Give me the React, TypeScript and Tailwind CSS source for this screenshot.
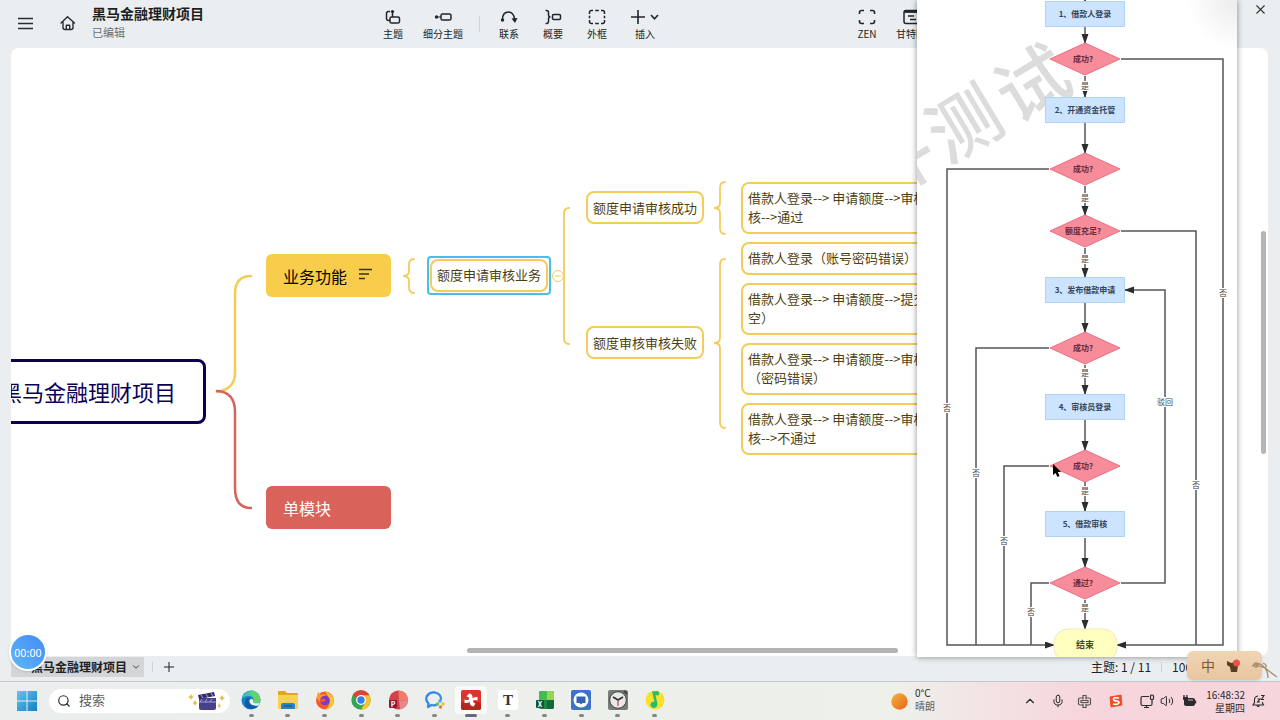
import type { ReactNode } from "react";
import { ChevronDown, ChevronUp, Mic, Plus, Search, Volume2, X } from "lucide-react";

const leaves = [
  ["借款人登录--> 申请额度-->审核", "核-->通过"],
  ["借款人登录（账号密码错误）"],
  ["借款人登录--> 申请额度-->提交", "空）"],
  ["借款人登录--> 申请额度-->审核", "（密码错误）"],
  ["借款人登录--> 申请额度-->审核", "核-->不通过"],
];

const steps = [
  { y: 14, text: "1、借款人登录" },
  { y: 110, text: "2、开通资金托管" },
  { y: 290, text: "3、发布借款申请" },
  { y: 407, text: "4、审核员登录" },
  { y: 524, text: "5、借款审核" },
];

const decisions = [
  { y: 59, text: "成功?" },
  { y: 169, text: "成功?" },
  { y: 231, text: "额度充足?" },
  { y: 348, text: "成功?" },
  { y: 466, text: "成功?" },
  { y: 583, text: "通过?" },
];

const arrows = [
  "M168 -10V1",
  "M168 27V43",
  "M168 76V97",
  "M168 123V153",
  "M168 186V215",
  "M168 248V277",
  "M168 303V332",
  "M168 365V394",
  "M168 420V450",
  "M168 482V511",
  "M168 538V567",
  "M168 600V629",
  "M204 59H306V645H200",
  "M132 169H30V645H137",
  "M204 583H248V290H208",
];

// these run into an arrow that is already drawn
const branches = ["M204 231H279V645", "M132 348H59V645", "M132 466H87V645", "M132 583H114V645"];

const edgeLabels = [
  { x: 168, y: 86, text: "是" },
  { x: 168, y: 198, text: "是" },
  { x: 168, y: 259, text: "是" },
  { x: 168, y: 373, text: "是" },
  { x: 168, y: 491, text: "是" },
  { x: 168, y: 608, text: "是" },
  { x: 306, y: 293, text: "否" },
  { x: 30, y: 408, text: "否" },
  { x: 279, y: 485, text: "否" },
  { x: 59, y: 473, text: "否" },
  { x: 87, y: 541, text: "否" },
  { x: 114, y: 612, text: "否" },
  { x: 248, y: 402, text: "驳回" },
];

const ToolButton = ({ label, width, children }: { label: string; width: string; children: ReactNode }) => (
  <button className={`${width} flex shrink-0 flex-col items-center gap-px whitespace-nowrap text-[10px] leading-[14px] text-[#1c1f22]`}>
    <span className="flex h-[18px] items-center justify-center">{children}</span>
    {label}
  </button>
);

const Header = () => (
  <header className="flex h-12 shrink-0 items-start overflow-hidden">
    <div className="flex w-[368px] shrink-0 items-start pl-[18px]">
      <button aria-label="菜单" className="mt-4">
        <svg width="16" height="16" fill="none" stroke="#2a2d30" strokeWidth="1.4">
          <path d="M0 2.5H15M0 7.5H15M0 12.5H15" />
        </svg>
      </button>
      <button aria-label="主页" className="mt-[15px] ml-[26px]">
        <svg width="16" height="16" fill="none" stroke="#2a2d30" strokeWidth="1.4" strokeLinejoin="round" strokeLinecap="round">
          <path d="M1 8L7.5 1.8L14.5 8M3 6.8V12.5Q3 14.5 5 14.5H11Q13 14.5 13 12.5V6.8M6.3 14.2V10.3H9.7V14.2" />
        </svg>
      </button>
      <div className="ml-4 pt-[3px]">
        <h1 className="text-[14px] leading-5 font-bold text-[#1c1f22]">黑马金融理财项目</h1>
        <p className="text-[11px] leading-[18px] text-[#6b6e71]">已编辑</p>
      </div>
    </div>

    <nav className="flex shrink-0 items-start pt-2">
      <ToolButton label="主题" width="w-[50px]">
        <svg width="16" height="16" fill="none" stroke="#222629" strokeWidth="1.5">
          <path d="M5 2.5H3.5Q1.5 2.5 1.5 4.5V9.5Q1.5 11.5 3.5 11.5H5" />
          <rect x="5" y="8" width="9.5" height="6" rx="1.6" />
          <path d="M7.5 3V8" />
          <circle cx="7.5" cy="2.5" r="1.6" fill="#222629" stroke="none" />
        </svg>
      </ToolButton>
      <ToolButton label="细分主题" width="w-[50px]">
        <svg width="18" height="16" fill="none" stroke="#222629" strokeWidth="1.5">
          <circle cx="2.5" cy="8" r="1.7" fill="#222629" stroke="none" />
          <path d="M2 8H7" strokeWidth="1" />
          <rect x="7" y="5" width="10" height="6" rx="1.6" />
        </svg>
      </ToolButton>
      <span className="mt-2 flex h-4 w-[19px] justify-end pr-[7px]">
        <i className="w-px bg-[#d2d5d8]" />
      </span>
      <ToolButton label="联系" width="w-11">
        <svg width="18" height="16" fill="none" stroke="#222629" strokeWidth="1.5">
          <path d="M2.5 10.5Q2.5 3 8.5 3Q13.5 3 14.5 10" />
          <circle cx="2.5" cy="11" r="1.7" fill="#222629" stroke="none" />
          <path d="M11.5 9.5L17.5 9L15 14Z" fill="#222629" stroke="none" />
        </svg>
      </ToolButton>
      <ToolButton label="概要" width="w-11">
        <svg width="18" height="16" fill="none" stroke="#222629" strokeWidth="1.5">
          <path d="M1.5 1.5H2.5Q4.5 1.5 4.5 3.5V6Q4.5 8 6.5 8Q4.5 8 4.5 10V12.5Q4.5 14.5 2.5 14.5H1.5" />
          <rect x="8.5" y="5.5" width="8" height="5" rx="1.2" />
        </svg>
      </ToolButton>
      <ToolButton label="外框" width="w-11">
        <svg width="18" height="16" fill="none" stroke="#222629" strokeWidth="1.5">
          <path d="M1.5 5V3.5Q1.5 1.5 3.5 1.5H5M7.2 1.5H10.8M13 1.5H14.5Q16.5 1.5 16.5 3.5V5M16.5 6.7V9.3M16.5 11V12.5Q16.5 14.5 14.5 14.5H13M10.8 14.5H7.2M5 14.5H3.5Q1.5 14.5 1.5 12.5V11M1.5 9.3V6.7" />
        </svg>
      </ToolButton>
      <ToolButton label="插入" width="w-[52px]">
        <svg width="30" height="16" fill="none" stroke="#222629" strokeWidth="1.6">
          <path d="M8 1V15M1 8H15M21 6L24.5 9.8L28 6" />
        </svg>
      </ToolButton>
    </nav>

    <div className="ml-auto flex w-[435px] shrink-0 items-start pt-2">
      <ToolButton label="ZEN" width="w-11">
        <svg width="18" height="16" fill="none" stroke="#222629" strokeWidth="1.6">
          <path d="M1.5 5V3.5Q1.5 1.5 3.5 1.5H6M12 1.5H14.5Q16.5 1.5 16.5 3.5V5M16.5 11V12.5Q16.5 14.5 14.5 14.5H12M6 14.5H3.5Q1.5 14.5 1.5 12.5V11" />
        </svg>
      </ToolButton>
      <ToolButton label="甘特图" width="w-11">
        <svg width="18" height="16" fill="none" stroke="#222629" strokeWidth="1.5">
          <rect x="2" y="1.5" width="16" height="13" rx="2" />
          <path d="M2.5 2.5H17.5" strokeWidth="2.8" />
          <path d="M6 7H12M8 10.5H14" />
        </svg>
      </ToolButton>
      <button aria-label="关闭" className="mr-3 ml-auto -mt-1.5">
        <X size={15} strokeWidth={1.8} color="#333" />
      </button>
    </div>
  </header>
);

// curly bracket opening to the right: tip on the left at mid
const brace = (x: number, top: number, mid: number, bottom: number) =>
  `M${x + 5} ${top}Q${x} ${top} ${x} ${top + 6}V${mid - 5}Q${x} ${mid} ${x - 6} ${mid}Q${x} ${mid} ${x} ${mid + 5}V${bottom - 6}Q${x} ${bottom} ${x + 5} ${bottom}`;

const topic = "rounded-lg border-2 border-[#f3cc5b] bg-white px-[5px] text-[13px] leading-[19px] text-[#4f3f10]";

const MindMap = () => (
  <main className="relative mr-3 ml-[11px] flex-1 overflow-hidden rounded-lg bg-white whitespace-nowrap">
    <svg className="absolute inset-0 h-full w-full" fill="none" strokeLinecap="round">
      <path d="M206 344Q224 341 224 325V246Q224 228 240 228" stroke="#f5cd55" strokeWidth="2.5" />
      <path d="M206 343Q224 344 224 364V440Q224 460 240 460" stroke="#d9635a" strokeWidth="2.5" />
      <g stroke="#f3cc5b" strokeWidth="1.8">
        <path d={brace(398, 211, 228, 245)} />
        <path d="M558 160Q553 160 553 166V290Q553 296 558 296" />
        <path d={brace(709, 134, 160, 186)} />
        <path d={brace(709, 211, 295, 380)} />
        <circle cx="547" cy="228" r="5.5" fill="#fff" strokeWidth="1" />
        <path d="M544 228H550" strokeWidth="1" />
      </g>
    </svg>

    <div className="absolute top-[311px] -left-[41px] flex h-[65px] w-[236px] items-center rounded-lg border-3 border-[#0b0052] bg-white pl-[27px] text-[22px] text-[#0b0052]">
      黑马金融理财项目
    </div>
    <div className="absolute top-[206px] left-[255px] flex h-[43px] w-[125px] items-center gap-3 rounded-md bg-[#f8cd4c] pl-[17px] text-[16px] text-black">
      业务功能
      <svg className="mb-1" width="14" height="12" stroke="#3d3210" strokeWidth="1.5">
        <path d="M0 1.5H13M0 6H10M0 10.5H6" />
      </svg>
    </div>
    <div className="absolute top-[438px] left-[255px] flex h-[43px] w-[125px] items-center rounded-md bg-[#d9635a] pl-[17px] text-[16px] text-white">
      单模块
    </div>

    <div className="absolute top-[208px] left-[416px] rounded border-2 border-[#4cbcea] p-px">
      <div className={`${topic} pt-1 pb-1.5`}>额度申请审核业务</div>
    </div>
    <div className={`${topic} absolute top-[143px] left-[575px] py-[5px]`}>额度申请审核成功</div>
    <div className={`${topic} absolute top-[278px] left-[575px] py-[5px]`}>额度审核审核失败</div>

    <div className="absolute top-[134px] left-[730px] flex w-[240px] flex-col gap-2">
      {leaves.map((lines) => (
        <div key={lines.join()} className={`${topic} pt-1 pb-1.5`}>
          {lines.map((line) => (
            <p key={line}>{line}</p>
          ))}
        </div>
      ))}
    </div>

    <div className="absolute top-[183px] right-0.5 h-[223px] w-[5px] rounded-full bg-[#b3b6b9]" />
    <div className="absolute bottom-[3px] left-[456px] h-[5px] w-[431px] rounded-full bg-[#b3b3b3]" />
  </main>
);

const FlowChart = () => (
  <aside className="absolute top-0 right-[43px] overflow-hidden bg-white shadow-[0_0_6px_rgba(0,0,0,0.45)]">
    <svg width="320" height="657" viewBox="0 0 320 657" fontFamily="'Noto Sans CJK SC', sans-serif" textAnchor="middle">
      <defs>
        <marker id="head" markerWidth="10" markerHeight="8" refX="9" refY="3.5" orient="auto" markerUnits="userSpaceOnUse">
          <path d="M0 0L10 3.5L0 7Z" fill="#2d2d2d" />
        </marker>
        <radialGradient id="corner" cx="320" cy="0" r="50" gradientUnits="userSpaceOnUse">
          <stop offset="0" stopColor="#ececec" />
          <stop offset="1" stopColor="#fff" />
        </radialGradient>
      </defs>
      <rect x="250" width="70" height="60" fill="url(#corner)" />
      <g fill="#dcdcdc" fontSize="72" fontWeight="500">
        <text transform="translate(-19 161) rotate(-31)" y="27">件</text>
        <text transform="translate(47 123) rotate(-31)" y="27">测</text>
        <text transform="translate(115 83) rotate(-31)" y="27">试</text>
      </g>
      <g fill="none" stroke="#555" strokeWidth="1.5">
        {branches.map((d) => (
          <path key={d} d={d} />
        ))}
        {arrows.map((d) => (
          <path key={d} d={d} markerEnd="url(#head)" />
        ))}
      </g>
      {edgeLabels.map(({ x, y, text }) => (
        <g key={`${x}-${y}`}>
          <rect x={x - text.length * 4} y={y - 5} width={text.length * 8} height="10" fill="#fff" />
          <text x={x} y={y + 3} fontSize="8" fill="#444">
            {text}
          </text>
        </g>
      ))}
      <g fontSize="8" fontWeight="700" fill="#33465a">
        {steps.map(({ y, text }) => (
          <g key={y}>
            <rect x="128.5" y={y - 12.5} width="79" height="25" fill="#cce4ff" stroke="#aed4f5" />
            <text x="168" y={y + 3}>{text}</text>
          </g>
        ))}
      </g>
      <g fontSize="8" fontWeight="700" fill="#6a2a36">
        {decisions.map(({ y, text }) => (
          <g key={y}>
            <path d={`M133 ${y}L168 ${y - 16}L203 ${y}L168 ${y + 16}Z`} fill="#f78c9b" stroke="#ee6e83" />
            <text x="166" y={y + 3}>{text}</text>
          </g>
        ))}
      </g>
      <rect x="137" y="629" width="63" height="33" rx="14" fill="#ffffbf" stroke="#f3e7c0" />
      <text x="168" y="648" fontSize="9" fontWeight="700" fill="#444">结束</text>
      <path d="M136 464V475L138.5 473L140.5 477L142.5 476L140.8 472H144Z" fill="#000" />
    </svg>
  </aside>
);

const StatusBar = () => (
  <div className="relative z-10 flex h-[25px] shrink-0 items-center pb-[3px] pl-[11px] text-[12px] text-[#1e2124]">
    <button className="flex h-5 w-[133px] items-center gap-1 bg-[#d3d5d7] pl-5 font-bold whitespace-nowrap">
      黑马金融理财项目
      <ChevronDown size={10} strokeWidth={2} />
    </button>
    <i className="ml-2 h-2.5 w-px bg-[#cfd2d4]" />
    <button aria-label="新建画布" className="ml-2">
      <Plus size={16} strokeWidth={1.5} />
    </button>
    <div className="ml-auto flex w-[189px] items-center">
      <span>主题: 1 / 11</span>
      <i className="mx-2.5 h-2.5 w-px bg-[#cfd2d4]" />
      <span>100%</span>
    </div>

    <div className="absolute -top-[23px] left-[9px] flex size-[38px] items-center justify-center rounded-full border-2 border-white bg-linear-to-tr from-[#5eb8f7] to-[#438af5] text-[11px] text-white shadow-sm">
      00:00
    </div>

    <div className="absolute -top-[5px] right-[18px] flex h-[29px] w-[75px] items-center rounded-md bg-linear-to-b from-[#f0d5b4] to-[#e8c6a0] pl-3.5 text-[14px] text-[#7a5938] shadow">
      中
      <svg className="ml-[11px]" width="16" height="16">
        <path d="M1 3L5 5L9 4L12 8L11 14H5L4 9L1 7Z" fill="#5b3d22" />
        <circle cx="10.5" cy="5" r="3.5" fill="#ee5146" />
      </svg>
      <svg className="absolute -right-4 bottom-0" width="28" height="20" fill="none" stroke="#a8926a" strokeWidth="1.3">
        <circle cx="6" cy="5" r="2" fill="#d5ab7f" />
        <path d="M2 6Q9 1 14 7Q20 12 27 17M6 5L15 8Q18 12 18 18M15 8Q18 5 13 3" />
      </svg>
    </div>
  </div>
);

const apps: { name: string; icon: ReactNode }[] = [
  {
    name: "Edge",
    icon: (
      <>
        <circle cx="10" cy="10" r="9.5" fill="#1b7fd0" />
        <path d="M.7 9A9.5 9.5 0 0 1 19.5 9.5Q19.5 13.5 15 13.5Q12 13.5 12 12Q14 7 8.5 6Q3 5.5 .7 9Z" fill="#3fc6a4" />
        <path d="M11 .6A9.5 9.5 0 0 1 19.5 9.5Q19.5 13.5 15 13.5Q12.5 13 13 10Q13 5 8 4Z" fill="#64d36a" />
        <path d="M7.5 10Q7 16 16.5 16.5Q11 21 5.5 17.5Q2 14 5 9Q6.5 7 9.5 7.5Q7.5 8.5 7.5 10Z" fill="#145a9f" />
        <path d="M12 12Q12 14 19 13L17.5 15.5Q9 16.5 8.5 11Q9 8 12 9.5Q12.8 10.5 12 12Z" fill="#e9f4f2" />
      </>
    ),
  },
  {
    name: "文件资源管理器",
    icon: (
      <>
        <path d="M0 2Q0 1 1 1H7L9 3H19Q20 3 20 4V10H0Z" fill="#e2a525" />
        <path d="M0 5H20V18Q20 19 19 19H1Q0 19 0 18Z" fill="#fbd057" />
        <path d="M3 19V15Q3 13 5 13H15Q17 13 17 15V19Z" fill="#2583c8" />
        <path d="M6 16H14" stroke="#1b5b94" strokeWidth="1.5" />
      </>
    ),
  },
  {
    name: "Firefox",
    icon: (
      <>
        <circle cx="10" cy="10.5" r="9" fill="#f9572f" />
        <path d="M10 1Q19 5 19 11Q18 19 10 19.5Q17 15 14 8Q12 5 10 1Z" fill="#ffc42e" />
        <path d="M1.5 8L3 2L6 5Q9 3 11 5L8 7Q5 8 5 12Z" fill="#ff9a2d" />
        <circle cx="10" cy="10.5" r="4.8" fill="#7c3bc6" />
        <path d="M5 10Q7 8 10 9Q12 10 8 12Q5 12 5 10Z" fill="#f9572f" />
      </>
    ),
  },
  {
    name: "Chrome",
    icon: (
      <>
        <circle cx="10" cy="10" r="9.7" fill="#35a552" />
        <path d="M10 10L1.6 5.15A9.7 9.7 0 0 1 18.4 5.15Z" fill="#df4335" />
        <path d="M10 5.15H18.4A9.7 9.7 0 0 1 10 19.7L14.3 12Z" fill="#f8c131" />
        <circle cx="10" cy="10" r="4.9" fill="#fff" />
        <circle cx="10" cy="10" r="3.7" fill="#397ee8" />
      </>
    ),
  },
  {
    name: "PowerPoint",
    icon: (
      <>
        <circle cx="10.5" cy="10" r="9.5" fill="#d3414b" />
        <path d="M10.5 .5A9.5 9.5 0 0 1 20 10L11 11Z" fill="#f27a68" />
        <path d="M11 11L20 10Q19 18 12 19.5Z" fill="#e5898a" />
        <rect x="1" y="10" width="8" height="8" rx="1" fill="#8c1638" />
        <text x="5" y="17" fontSize="7" fontWeight="700" fill="#fff" textAnchor="middle">P</text>
      </>
    ),
  },
  {
    name: "企业微信",
    icon: (
      <>
        <path d="M13 14Q10 16 6.5 15L3 17L3.5 13.5Q0 10 2 6Q5 1.5 10 2.5Q16 4 16 9" fill="none" stroke="#3489e8" strokeWidth="2.3" strokeLinecap="round" strokeLinejoin="round" />
        <circle cx="15" cy="11" r="1.7" fill="#3fa9f0" />
        <circle cx="18" cy="14" r="1.7" fill="#f6b637" />
        <circle cx="15.5" cy="17" r="1.7" fill="#ef6b42" />
        <circle cx="12.5" cy="14" r="1.7" fill="#65c44c" />
      </>
    ),
  },
  {
    name: "XMind",
    icon: (
      <>
        <rect width="20" height="20" rx="2" fill="#d9362c" />
        <path d="M0 13Q9 9 20 13V18Q20 20 18 20H2Q0 20 0 18Z" fill="#ba241f" />
        <path d="M8 3.5Q12 3.5 11.5 8.5Q12.5 6.500 16.500 7V10.500Q13.500 9.500 12 10.500Q12.500 13.500 14.500 13.500L12.500 16.500Q8.500 16 8.700 11.500Q7.500 13.500 3.500 13V9.500Q6.500 10.500 8 9.500Q8.500 6.500 5.500 6.500Z" fill="#fff" />
      </>
    ),
  },
  {
    name: "Typora",
    icon: (
      <>
        <rect width="20" height="20" rx="3" fill="#fff" />
        <text x="10" y="15" fontSize="15" fontWeight="700" fontFamily="'Liberation Serif', serif" fill="#333" textAnchor="middle">T</text>
      </>
    ),
  },
  {
    name: "Excel",
    icon: (
      <>
        <rect x="4" y="1" width="15" height="18" rx="2" fill="#1d8846" />
        <path d="M4 3Q4 1 6 1H12V10H4Z" fill="#44bd4d" />
        <path d="M12 1H17Q19 1 19 3V10H12Z" fill="#91d654" />
        <path d="M12 10H19V17Q19 19 17 19H12Z" fill="#14693a" />
        <rect x="1" y="10" width="8" height="8" rx="1" fill="#0e5730" />
        <text x="5" y="17" fontSize="7" fontWeight="700" fill="#fff" textAnchor="middle">X</text>
      </>
    ),
  },
  {
    name: "会议",
    icon: (
      <>
        <rect width="20" height="20" rx="2" fill="#3d72c8" />
        <circle cx="10" cy="10" r="7.5" fill="#fff" />
        <path d="M5.5 6.5H14.5V13H11.5L10 14.5L8.5 13H5.5Z" fill="#3464b5" />
      </>
    ),
  },
  {
    name: "计时器",
    icon: (
      <>
        <rect width="20" height="20" rx="2" fill="#777c7b" />
        <circle cx="10" cy="10" r="8.3" fill="#e9eae8" stroke="#444" />
        <path d="M5 7L10 10L15 7" fill="none" stroke="#333" strokeWidth="1.8" />
        <path d="M10 10V16" stroke="#c44" strokeWidth="1.2" />
        <path d="M16 1L19 4" stroke="#444" strokeWidth="2" />
      </>
    ),
  },
  {
    name: "QQ音乐",
    icon: (
      <>
        <circle cx="10" cy="10" r="9.5" fill="#fbe02c" />
        <path d="M7 1.5L13 1Q15 3 14 5Q12 5.500 10.500 5L12.500 14Q12 18 8.500 18Q5 17 5.500 14Q6.500 11 9.500 11.500Z" fill="#22bd73" />
      </>
    ),
  },
];

const Taskbar = () => (
  <footer className="flex h-[39px] shrink-0 items-center border-t border-[#c5c8ca] bg-linear-to-r from-[#eceeee] via-[#eef0ea] via-70% to-[#f7d5dc] to-85% pl-[17px] text-[10px] text-[#2b2a2c]">
    <button aria-label="开始">
      <svg width="20" height="20">
        <defs>
          <linearGradient id="win" x2="1" y2="1">
            <stop stopColor="#63c5ee" />
            <stop offset="1" stopColor="#1480c4" />
          </linearGradient>
        </defs>
        <path d="M0 0H9.5V9.5H0ZM10.5 0H20V9.5H10.5ZM0 10.5H9.5V20H0ZM10.5 10.5H20V20H10.5Z" fill="url(#win)" />
      </svg>
    </button>
    <label className="ml-3 flex h-6 w-[181px] shrink-0 items-center rounded-full bg-white pr-1 pl-2">
      <Search size={14} strokeWidth={2} />
      <input aria-label="搜索" placeholder="搜索" className="ml-2 w-20 bg-transparent pb-0.5 text-[13px] outline-none placeholder:text-[#5e5e5e]" />
      <svg className="ml-auto" width="38" height="20">
        <path d="M11 7H28V17Q28 19 26 19H13Q11 19 11 17Z" fill="#48408a" />
        <path d="M10 4L26 1L27 5L11 8Z" fill="#33296b" />
        <path d="M13 4L15 7M18 3L20 6M23 2L25 5M14 8L12 11M19 8L17 11M24 8L22 11M11 11H28" stroke="#a9a2dd" />
        <path d="M3 3L4 5L6 6L4 7L3 9L2 7L0 6L2 5ZM7 9L8 11L9 12L8 13L7 15L6 13L5 12L6 11ZM34 4L35 6L37 7L35 8L34 10L33 8L31 7L33 6ZM31 12L32 14L33 15L31 17L30 15Z" fill="#e0ba52" />
      </svg>
    </label>
    <nav className="ml-[3px] grid h-full w-[440px] shrink-0 grid-cols-12">
      {apps.map(({ name, icon }) => (
        <button key={name} aria-label={name} className="flex flex-col items-center pt-1">
          <span className={`flex h-7 w-8 items-center justify-center rounded ${name === "XMind" ? "bg-white/70" : ""}`}>
            <svg width="20" height="20">{icon}</svg>
          </span>
          <i className={`h-[3px] rounded-full ${name === "XMind" ? "w-3 bg-[#6b6389]" : "w-[5px] bg-[#858589]"}`} />
        </button>
      ))}
    </nav>

    <div className="ml-auto flex w-[389px] shrink-0 items-center leading-[13px]">
      <svg width="17" height="17">
        <defs>
          <linearGradient id="sun" x2="1" y2="1">
            <stop stopColor="#f6b23c" />
            <stop offset="1" stopColor="#e8641c" />
          </linearGradient>
        </defs>
        <circle cx="8.5" cy="8.5" r="8.2" fill="url(#sun)" />
      </svg>
      <div className="ml-[7px] w-[108px] pb-1">
        <p>0°C</p>
        <p className="text-[#626262]">晴朗</p>
      </div>
      <div className="flex w-[180px] items-center">
        <ChevronUp size={14} />
        <Mic size={14} strokeWidth={1.7} className="ml-3.5" />
        <svg className="ml-3" width="15" height="15" fill="none" stroke="#555" strokeWidth="1.2">
          <path d="M6 5.500V1.500H9V5.500M6 9.500V13.500H9V9.500M6 4H3Q1.500 4 1.500 5.500V9.500Q1.500 11 3 11H6M9 4H12Q13.500 4 13.500 5.500V9.500Q13.500 11 12 11H9M4 6.500H11V8.500H4Z" />
        </svg>
        <svg className="ml-[17px]" width="14" height="14">
          <path d="M1 3L12 1L13 11L2 13Z" fill="#ec4e2f" stroke="#ec4e2f" strokeLinejoin="round" />
          <path d="M10 4Q4 3 4.5 5.5Q5 7 8 7Q11 7.5 9.5 9.5Q8 11 4 10" fill="none" stroke="#fff" strokeWidth="1.6" />
        </svg>
        <svg className="ml-[17px]" width="15" height="15" fill="none" stroke="#2b2a2c" strokeWidth="1.2">
          <path d="M9 2.5H2.500Q1 2.500 1 4V10Q1 11.500 2.500 11.500H10.500Q12 11.500 12 10V8M4 13.500H9M6.500 11.500V13.500M12 8V6" />
          <rect x="10.5" y="1" width="3" height="4.500" rx="1" />
        </svg>
        <Volume2 size={14} strokeWidth={1.7} className="ml-[5px]" />
        <svg className="ml-2" width="15" height="14">
          <rect x="2" y="4" width="11" height="8" rx="2" fill="#2b2a2c" />
          <path d="M13.500 6.500V9.500M2 1V4M5 1V4" stroke="#2b2a2c" strokeWidth="1.300" />
          <path d="M1 3H6V5.500Q3.500 7.500 1 5.500Z" fill="#2b2a2c" />
          <path d="M6 6H11" stroke="#f7d5dc" strokeWidth=".8" />
        </svg>
      </div>
      <div className="w-[42px] text-right">
        <p className="-mx-1 pr-1 whitespace-nowrap">16:48:32</p>
        <p>星期四</p>
      </div>
      <svg className="ml-[7px]" width="13" height="14" fill="none" stroke="#2b2a2c" strokeWidth="1.1">
        <path d="M6 2Q2.500 2.500 2.500 6V8.500L1 11H11.500L10.500 9V8M5 11.500Q6 13.500 7.500 11.500M5.500 5H8L5.500 8H8M9 1.500H12L9.500 5.500H12" />
      </svg>
    </div>
  </footer>
);

export default function App() {
  return (
    <div className="relative flex h-screen flex-col overflow-hidden bg-[#ebeef0] font-['Noto_Sans_CJK_SC',sans-serif]">
      <Header />
      <MindMap />
      <FlowChart />
      <StatusBar />
      <Taskbar />
    </div>
  );
}
